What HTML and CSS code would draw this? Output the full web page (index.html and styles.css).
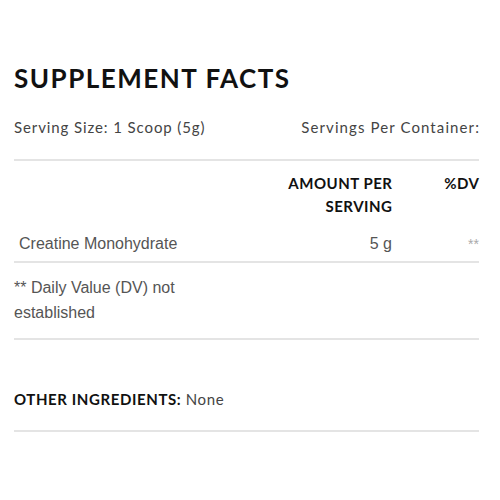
FILE: index.html
```html
<!DOCTYPE html>
<html>
<head>
<meta charset="utf-8">
<link rel="stylesheet" href="styles.css">
</head>
<body>
<div class="facts">
  <h1 class="title">SUPPLEMENT FACTS</h1>
  <div class="serving">
    <span>Serving Size: 1 Scoop (5g)</span>
    <span class="per">Servings Per Container:</span>
  </div>
  <div class="row head">
    <div class="c-name"></div>
    <div class="c-amt">AMOUNT PER<br>SERVING</div>
    <div class="c-dv">%DV</div>
  </div>
  <div class="row item">
    <div class="c-name">Creatine Monohydrate</div>
    <div class="c-amt">5 g</div>
    <div class="c-dv stars">**</div>
  </div>
  <div class="note"><p>** Daily Value (DV) not established</p></div>
  <div class="other"><b>OTHER INGREDIENTS:</b> None</div>
</div>
</body>
</html>
```
FILE: styles.css
```css
html, body { margin: 0; padding: 0; background: #fff; }
.facts {
  width: 465px;
  margin-left: 14px;
  padding-top: 62px;
  font-family: Lato, "Liberation Sans", sans-serif;
  color: #111;
}
.title {
  margin: 0;
  font-size: 26px;
  font-weight: 700;
  line-height: 32px;
  letter-spacing: 1.5px;
}
.serving {
  display: flex;
  justify-content: space-between;
  margin-top: 23px;
  font-size: 15px;
  letter-spacing: 0.9px;
  color: #444;
  line-height: 20px;
  padding-bottom: 22px;
  border-bottom: 2px solid #e4e4e4;
}
.serving .per { letter-spacing: 1.1px; margin-right: -1px; }
.row {
  display: grid;
  grid-template-columns: 1fr 120px 87px;
}
.head {
  font-weight: 700;
  font-size: 15px;
  letter-spacing: 0.5px;
  line-height: 23px;
  padding-top: 11px;
}
.head .c-amt, .head .c-dv { margin-right: -0.5px; }
.c-amt, .c-dv { text-align: right; }
.item {
  font-family: "Liberation Sans", Arial, sans-serif;
  font-size: 16px;
  color: #555;
  line-height: 20px;
  padding: 16px 0 7px;
  border-bottom: 2px solid #e4e4e4;
}
.item .c-name { padding-left: 5px; }
.stars { color: #aaa; font-size: 14px; }
.note {
  font-family: "Liberation Sans", Arial, sans-serif;
  font-size: 16px;
  color: #555;
  line-height: 25px;
  padding: 12px 0 13px;
  border-bottom: 2px solid #e4e4e4;
}
.note p { margin: 0; width: 200px; }
.other {
  font-size: 15px;
  letter-spacing: 0.6px;
  color: #444;
  line-height: 20px;
  padding: 49px 0 21px;
  border-bottom: 2px solid #e4e4e4;
}
.other b { color: #111; font-weight: 700; }
```
